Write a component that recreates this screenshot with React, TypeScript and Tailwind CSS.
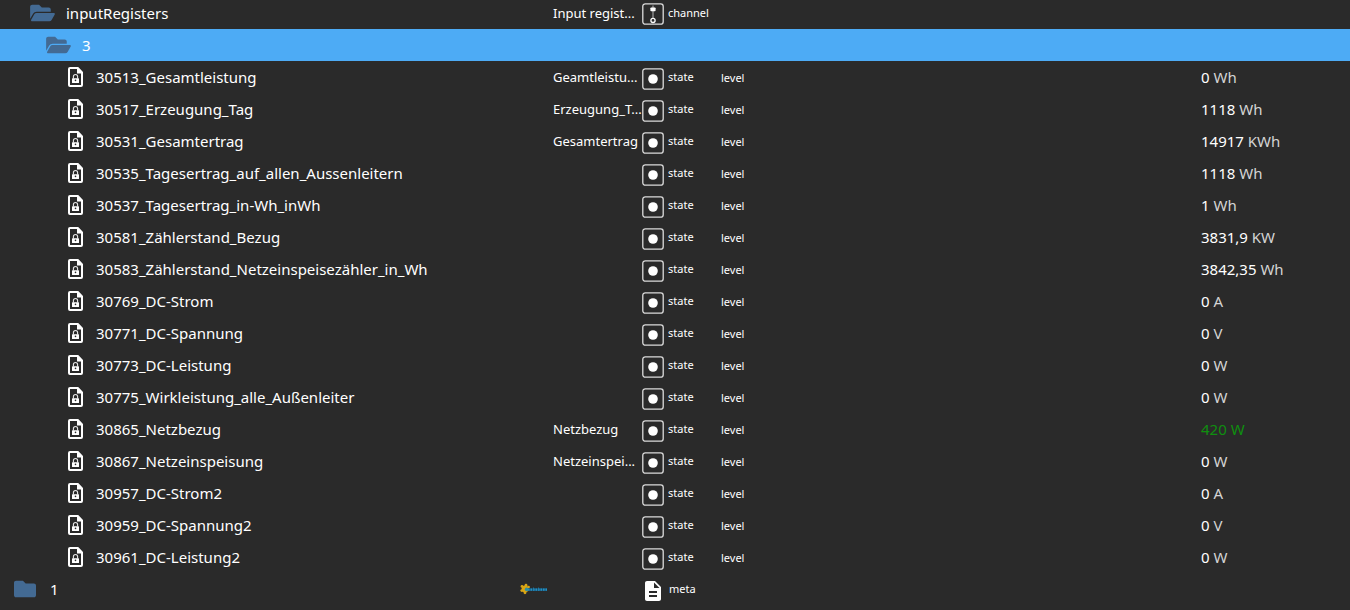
import { FaFolder, FaFolderOpen } from "react-icons/fa";
import { MdDescription } from "react-icons/md";

type StateItem = {
  id: string;
  title?: string;
  value: string;
  unit: string;
  changed?: boolean;
};

const states: StateItem[] = [
  { id: "30513_Gesamtleistung", title: "Geamtleistu...", value: "0", unit: "Wh" },
  { id: "30517_Erzeugung_Tag", title: "Erzeugung_T...", value: "1118", unit: "Wh" },
  { id: "30531_Gesamtertrag", title: "Gesamtertrag", value: "14917", unit: "KWh" },
  { id: "30535_Tagesertrag_auf_allen_Aussenleitern", value: "1118", unit: "Wh" },
  { id: "30537_Tagesertrag_in-Wh_inWh", value: "1", unit: "Wh" },
  { id: "30581_Zählerstand_Bezug", value: "3831,9", unit: "KW" },
  { id: "30583_Zählerstand_Netzeinspeisezähler_in_Wh", value: "3842,35", unit: "Wh" },
  { id: "30769_DC-Strom", value: "0", unit: "A" },
  { id: "30771_DC-Spannung", value: "0", unit: "V" },
  { id: "30773_DC-Leistung", value: "0", unit: "W" },
  { id: "30775_Wirkleistung_alle_Außenleiter", value: "0", unit: "W" },
  { id: "30865_Netzbezug", title: "Netzbezug", value: "420", unit: "W", changed: true },
  { id: "30867_Netzeinspeisung", title: "Netzeinspei...", value: "0", unit: "W" },
  { id: "30957_DC-Strom2", value: "0", unit: "A" },
  { id: "30959_DC-Spannung2", value: "0", unit: "V" },
  { id: "30961_DC-Leistung2", value: "0", unit: "W" },
];

function LockedFileIcon() {
  return (
    <svg className="w-[15px] h-5 shrink-0" viewBox="0 0 15 20" fill="none">
      <path d="M2 1h7.8L14 5.4V18a1 1 0 0 1-1 1H2a1 1 0 0 1-1-1V2a1 1 0 0 1 1-1z" stroke="white" strokeWidth={2} />
      <path d="M9 1h1.5L14 4.8V6.6H9z" fill="white" />
      <path d="M5.4 11.5V9.6a2.1 2.1 0 0 1 4.2 0v1.9" stroke="#e8e8e8" strokeWidth={1.1} />
      <rect x="4" y="11.2" width="7" height="4.8" rx="0.5" fill="white" />
      <circle cx="7.5" cy="13.4" r="0.8" fill="#2a2a2a" />
    </svg>
  );
}

function StateIcon() {
  return (
    <svg className="w-[22px] h-[22px] shrink-0" viewBox="0 0 22 22" fill="none">
      <rect x="0.8" y="0.8" width="20.4" height="20.4" rx="2.5" stroke="#dcdcdc" strokeWidth={1.3} />
      <circle cx="11" cy="11" r="4.8" fill="white" />
    </svg>
  );
}

function ChannelIcon() {
  return (
    <svg className="w-[22px] h-[22px] shrink-0" viewBox="0 0 22 22" fill="none">
      <rect x="0.8" y="0.8" width="20.4" height="20.4" rx="2.5" stroke="#dcdcdc" strokeWidth={1.3} />
      <path d="M11 2.5v13" stroke="#b8b8b8" strokeWidth={1} />
      <rect x="8.4" y="4.4" width="5.2" height="3.8" rx="0.8" fill="white" />
      <circle cx="11" cy="17.4" r="2.1" stroke="white" strokeWidth={1.3} />
    </svg>
  );
}

function AdapterLogo() {
  return (
    <svg className="w-7 h-3" viewBox="0 0 28 12">
      <g fill="#d9a514">
        <circle cx="5" cy="6" r="3.4" />
        <circle cx="2" cy="3.4" r="1.4" />
        <circle cx="6" cy="2.2" r="1.4" />
        <circle cx="8.6" cy="4" r="1.3" />
        <circle cx="1.8" cy="7.6" r="1.4" />
        <circle cx="5" cy="9.8" r="1.4" />
      </g>
      <circle cx="6.6" cy="6.4" r="1.8" fill="#2f8fa0" />
      <path d="M8 6.6h19" stroke="#17567a" strokeWidth={2.6} />
      <path d="M8 6.6h19" stroke="#2590c2" strokeWidth={2.2} strokeDasharray="1.6 0.9" />
      <path d="M13.5 4.6v2M18.5 4.6v2" stroke="#1f7aa6" strokeWidth={1} />
    </svg>
  );
}

export default function App() {
  return (
    <div className="min-h-screen overflow-hidden bg-[#2a2a2a] text-white font-['Segoe_UI','Noto_Sans',sans-serif]">
      <table className="w-full table-fixed border-collapse text-left whitespace-nowrap">
        <colgroup>
          <col className="w-[38%]" />
          <col className="w-10" />
          <col className="w-[88px]" />
          <col className="w-20" />
          <col />
          <col className="w-[149px]" />
        </colgroup>
        <tbody>
          <tr className="h-[29px]">
            <td className="p-0 pb-[3px]">
              <div className="flex items-center gap-[11px] pl-[30px] text-[15px] leading-5">
                <FaFolderOpen className="w-[25px] h-[22px] text-[#436a93]" />
                inputRegisters
              </div>
            </td>
            <td className="p-0" />
            <td className="p-0 pb-[3px] text-[13px] leading-5">Input regist...</td>
            <td className="p-0 pb-[3px]">
              <div className="flex items-center gap-1 pl-px text-[11px] leading-5">
                <span className="pt-0.5">
                  <ChannelIcon />
                </span>
                channel
              </div>
            </td>
            <td className="p-0" />
            <td className="p-0" />
          </tr>

          {/* Selected folder */}
          <tr className="h-8 bg-[#4dabf5]">
            <td className="p-0" colSpan={6}>
              <div className="flex items-center gap-[11px] pl-[46px] text-[15px] leading-5">
                <FaFolderOpen className="w-[25px] h-[22px] text-[#436a93]" />
                3
              </div>
            </td>
          </tr>

          {states.map((item) => (
            <tr key={item.id} className="h-8">
              <td className="p-0">
                <div className="flex items-center gap-[13px] pl-[68px] text-[15px] leading-5">
                  <LockedFileIcon />
                  {item.id}
                </div>
              </td>
              <td className="p-0" />
              <td className="p-0 text-[13px] leading-5">{item.title}</td>
              <td className="p-0">
                <div className="flex items-center gap-1 pl-px text-[11px] leading-5">
                  <span className="pt-[3px]">
                    <StateIcon />
                  </span>
                  state
                </div>
              </td>
              <td className="p-0 pt-px text-[11px] leading-5">level</td>
              <td className={`p-0 text-[15px] leading-5 ${item.changed ? "text-[#0f8f0f]" : ""}`}>
                {item.value} <span className={item.changed ? "" : "text-[#d4d4d4]"}>{item.unit}</span>
              </td>
            </tr>
          ))}

          <tr className="h-8">
            <td className="p-0">
              <div className="flex items-center gap-[14px] pl-[14px] text-[15px] leading-5">
                <FaFolder className="w-[22px] h-[22px] text-[#436a93]" />
                1
              </div>
            </td>
            <td className="p-0 pl-[7px]">
              <AdapterLogo />
            </td>
            <td className="p-0" />
            <td className="p-0">
              <div className="flex items-center gap-1 text-[11px] leading-5">
                <span className="pt-[3px]">
                  <MdDescription className="w-6 h-6" />
                </span>
                meta
              </div>
            </td>
            <td className="p-0" />
            <td className="p-0" />
          </tr>
        </tbody>
      </table>
    </div>
  );
}
